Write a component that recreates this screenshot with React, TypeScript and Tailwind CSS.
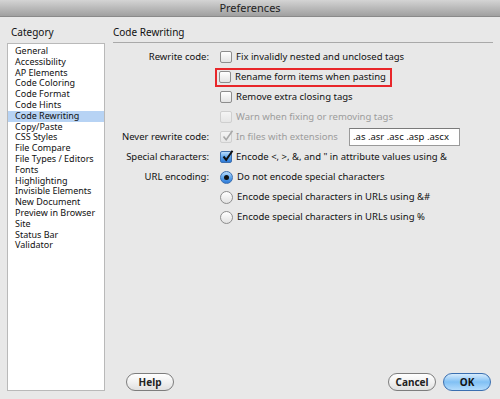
import React from "react";

const categories = [
  "General",
  "Accessibility",
  "AP Elements",
  "Code Coloring",
  "Code Format",
  "Code Hints",
  "Code Rewriting",
  "Copy/Paste",
  "CSS Styles",
  "File Compare",
  "File Types / Editors",
  "Fonts",
  "Highlighting",
  "Invisible Elements",
  "New Document",
  "Preview in Browser",
  "Site",
  "Status Bar",
  "Validator",
];

type BoxProps = { checked?: boolean; disabled?: boolean };

const Checkbox = ({ checked, disabled }: BoxProps) => {
  if (checked && !disabled) {
    return (
      <span className="relative flex h-[12px] w-[12px] shrink-0 items-center justify-center rounded-[2px] border border-[#3d6fae] bg-gradient-to-b from-[#b9dcfb] via-[#5ea6ee] to-[#2d7ad8]">
        <svg viewBox="0 0 12 12" className="absolute -top-[2px] left-[1px] h-[12px] w-[12px]">
          <path d="M1.5 6.5 L4.2 9.8 L10.5 0.8" fill="none" stroke="#111" strokeWidth="2" />
        </svg>
      </span>
    );
  }
  return (
    <span
      className={`relative flex h-[12px] w-[12px] shrink-0 items-center justify-center rounded-[2px] border bg-gradient-to-b ${
        disabled ? "border-[#cfcfcf] from-[#f4f4f4] to-[#e6e6e6]" : "border-[#8d8d8d] from-[#ffffff] to-[#e4e4e4]"
      }`}
    >
      {checked && (
        <svg viewBox="0 0 12 12" className="absolute -top-[2px] left-[1px] h-[12px] w-[12px]">
          <path d="M1.5 6.5 L4.2 9.8 L10.5 0.8" fill="none" stroke="#a8a8a8" strokeWidth="1.6" />
        </svg>
      )}
    </span>
  );
};

const Radio = ({ checked }: { checked?: boolean }) =>
  checked ? (
    <span className="flex h-[13px] w-[13px] shrink-0 items-center justify-center rounded-full border border-[#3d6fae] bg-gradient-to-b from-[#b9dcfb] via-[#5ea6ee] to-[#2d7ad8]">
      <span className="h-[5px] w-[5px] rounded-full bg-[#111]" />
    </span>
  ) : (
    <span className="h-[13px] w-[13px] shrink-0 rounded-full border border-[#8d8d8d] bg-gradient-to-b from-[#ffffff] to-[#e2e2e2]" />
  );

const Row = ({ label, children }: { label?: string; children: React.ReactNode }) => (
  <div className="flex h-5 items-center">
    <div className="w-[98px] shrink-0 pr-[2px] text-right">{label ? label + ":" : ""}</div>
    <div className="ml-[9px] flex items-center">{children}</div>
  </div>
);

const Button = ({ label, primary }: { label: string; primary?: boolean }) => (
  <button
    className={`h-[18px] w-[48px] rounded-full border text-[10px] font-bold leading-none ${
      primary
        ? "border-[#3a6fb0] bg-gradient-to-b from-[#d6ebfc] via-[#80c0f4] to-[#b3dcfc] text-[#111]"
        : "border-[#7d7d7d] bg-gradient-to-b from-[#ffffff] via-[#f1f1f1] to-[#e0e0e0] text-[#222]"
    }`}
  >
    {label}
  </button>
);

export default function App() {
  return (
    <div className="flex h-[399px] w-[500px] flex-col bg-[#e8e8e8] font-['Noto_Sans',sans-serif] text-[9.5px] text-[#111]">
      {/* Title bar */}
      <div className="flex h-[17px] items-center justify-center border-b border-[#8a8a8a] bg-gradient-to-b from-[#d4d4d4] to-[#a0a0a0] text-[11px] text-[#222]">
        Preferences
      </div>

      <div className="flex flex-1 pl-[7px] pr-[7px] pt-[9px] pb-[8px]">
        {/* Category list */}
        <div className="flex w-[98px] flex-col">
          <div className="pl-[4px] text-[10px] leading-[13px]">Category</div>
          <div className="mt-[4px] flex-1 border border-[#b9b9b9] bg-white pt-[2px] text-[9px]">
            {categories.map((c) => (
              <div
                key={c}
                className={`h-[10.8px] pl-[7px] leading-[10.8px] ${c === "Code Rewriting" ? "bg-[#b7d3f4]" : ""}`}
              >
                {c}
              </div>
            ))}
          </div>
        </div>

        {/* Settings */}
        <div className="ml-[8px] flex flex-1 flex-col">
          <div className="border-b border-[#a9a9a9] pb-[3px] text-[10px] leading-[13px]">Code Rewriting</div>
          <div className="mt-[4px] flex flex-col">
            <Row label="Rewrite code">
              <Checkbox />
              <span className="ml-[4px]">Fix invalidly nested and unclosed tags</span>
            </Row>
            <Row>
              <div className="-ml-[5px] flex h-[19px] items-center border-2 border-[#e8262a] pl-[2px] pr-[4px]">
                <Checkbox />
                <span className="ml-[4px]">Rename form items when pasting</span>
              </div>
            </Row>
            <Row>
              <Checkbox />
              <span className="ml-[4px]">Remove extra closing tags</span>
            </Row>
            <Row>
              <Checkbox disabled />
              <span className="ml-[4px] text-[#9c9c9c]">Warn when fixing or removing tags</span>
            </Row>
            <Row label="Never rewrite code">
              <Checkbox checked disabled />
              <span className="ml-[4px] w-[113px] text-[#9c9c9c]">In files with extensions</span>
              <div className="flex h-[18px] w-[111px] items-center overflow-hidden whitespace-nowrap border border-[#9a9a9a] border-t-[#7a7a7a] bg-white pl-[3px]">
                .as .asr .asc .asp .ascx
              </div>
            </Row>
            <Row label="Special characters">
              <Checkbox checked />
              <span className="ml-[4px]">Encode &lt;, &gt;, &amp;, and " in attribute values using &amp;</span>
            </Row>
            <Row label="URL encoding">
              <Radio checked />
              <span className="ml-[4px]">Do not encode special characters</span>
            </Row>
            <Row>
              <Radio />
              <span className="ml-[4px]">Encode special characters in URLs using &amp;#</span>
            </Row>
            <Row>
              <Radio />
              <span className="ml-[4px]">Encode special characters in URLs using %</span>
            </Row>
          </div>

          <div className="mt-auto flex items-center pl-[13px] pr-[2px]">
            <Button label="Help" />
            <div className="flex-1" />
            <Button label="Cancel" />
            <div className="ml-[7px]">
              <Button label="OK" primary />
            </div>
          </div>
        </div>
      </div>
    </div>
  );
}
